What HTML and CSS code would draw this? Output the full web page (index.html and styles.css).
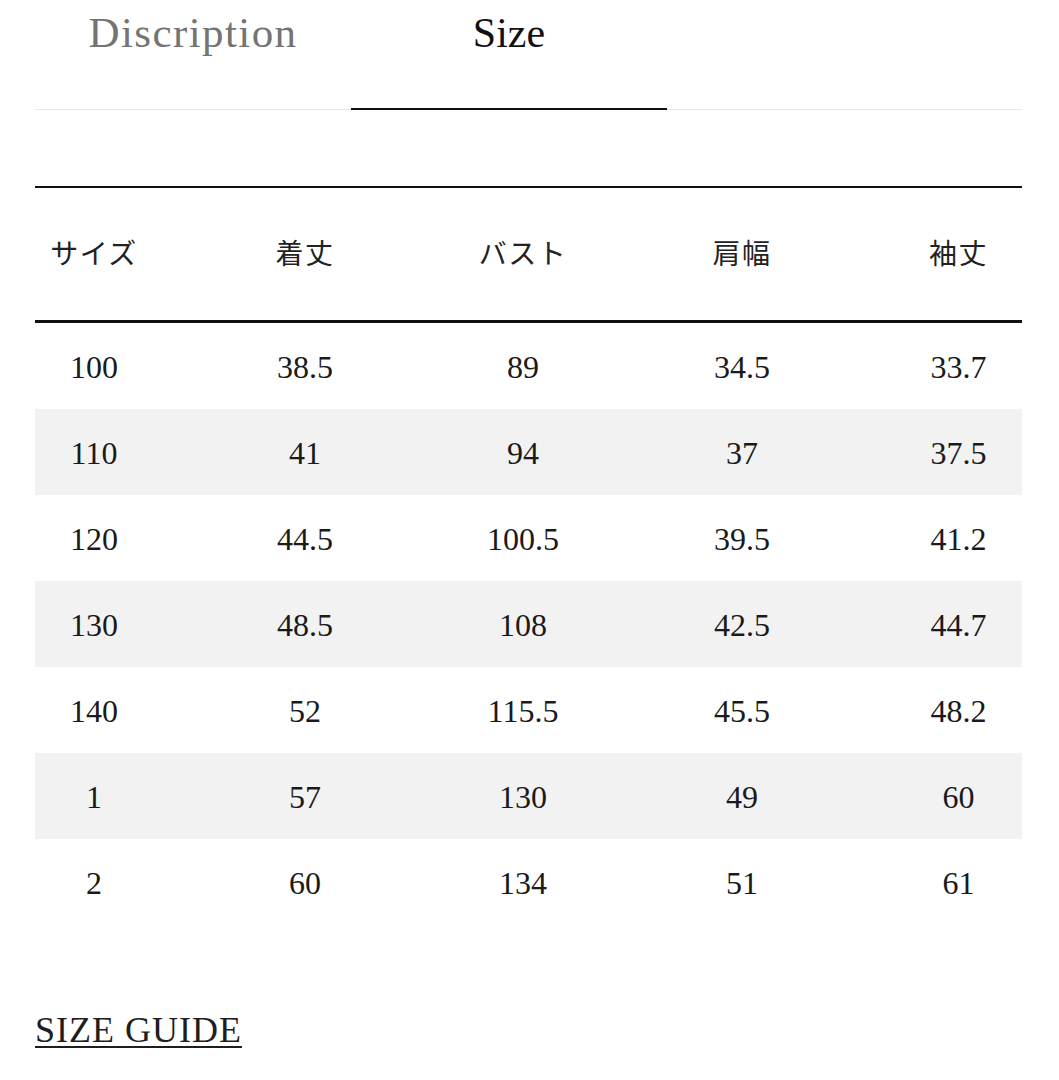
FILE: index.html
```html
<!DOCTYPE html>
<html lang="ja">
<head>
<meta charset="utf-8">
<title>Size</title>
<link rel="stylesheet" href="styles.css">
</head>
<body>
<div class="page">
  <div class="tabs">
    <div class="tab tab-wide">Discription</div>
    <div class="tab active">Size</div>
  </div>

  <div class="size-table">
    <div class="row head">
      <div class="cell">サイズ</div>
      <div class="cell">着丈</div>
      <div class="cell">バスト</div>
      <div class="cell">肩幅</div>
      <div class="cell">袖丈</div>
    </div>
    <div class="row">
      <div class="cell">100</div><div class="cell">38.5</div><div class="cell">89</div><div class="cell">34.5</div><div class="cell">33.7</div>
    </div>
    <div class="row alt">
      <div class="cell">110</div><div class="cell">41</div><div class="cell">94</div><div class="cell">37</div><div class="cell">37.5</div>
    </div>
    <div class="row">
      <div class="cell">120</div><div class="cell">44.5</div><div class="cell">100.5</div><div class="cell">39.5</div><div class="cell">41.2</div>
    </div>
    <div class="row alt">
      <div class="cell">130</div><div class="cell">48.5</div><div class="cell">108</div><div class="cell">42.5</div><div class="cell">44.7</div>
    </div>
    <div class="row">
      <div class="cell">140</div><div class="cell">52</div><div class="cell">115.5</div><div class="cell">45.5</div><div class="cell">48.2</div>
    </div>
    <div class="row alt">
      <div class="cell">1</div><div class="cell">57</div><div class="cell">130</div><div class="cell">49</div><div class="cell">60</div>
    </div>
    <div class="row">
      <div class="cell">2</div><div class="cell">60</div><div class="cell">134</div><div class="cell">51</div><div class="cell">61</div>
    </div>
  </div>

  <a class="guide" href="#">SIZE GUIDE</a>
</div>
</body>
</html>
```

FILE: styles.css
```css
html, body {
  margin: 0;
  padding: 0;
  background: #ffffff;
}

body {
  font-family: "Liberation Serif", "Times New Roman", serif;
  color: #1e1e1e;
}

.page {
  width: 987px;
  margin-left: 35px;
}

.tabs {
  display: flex;
  border-bottom: 1px solid #e8e8e8;
}

.tab {
  width: 316px;
  height: 110px;
  box-sizing: border-box;
  margin-bottom: -1px;
  padding-top: 8px;
  font-size: 42px;
  line-height: 50px;
  text-align: center;
  color: #747474;
}

.tab-wide {
  letter-spacing: 1.4px;
  font-size: 43px;
}

.tab.active {
  color: #111111;
  border-bottom: 2px solid #111111;
}

.size-table {
  margin-top: 76px;
  border-top: 2px solid #111111;
}

.row {
  display: grid;
  grid-template-columns: 118px 304px 132px 306px 127px;
  height: 86px;
  align-items: center;
}

.row.alt {
  background: #f2f2f2;
}

.row.head {
  height: 132px;
  border-bottom: 3px solid #111111;
}

.cell {
  text-align: center;
  font-size: 32px;
  line-height: 40px;
  color: #1a1a1a;
  padding-top: 2px;
}

.head .cell {
  font-family: "Noto Sans CJK JP", "Noto Sans", sans-serif;
  font-size: 28px;
  font-weight: 400;
  letter-spacing: 1.5px;
  color: #222222;
  padding-top: 0;
  margin-top: -4px;
}

.guide {
  display: inline-block;
  margin-top: 85px;
  font-size: 36px;
  line-height: 40px;
  letter-spacing: 1px;
  color: #1e1e1e;
  text-decoration: underline;
  text-decoration-thickness: 2px;
  text-underline-offset: 4px;
}
```
